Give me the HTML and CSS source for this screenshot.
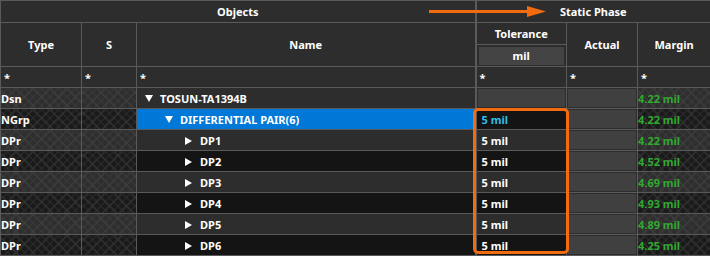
FILE: index.html
```html
<!DOCTYPE html>
<html lang="en">
<head>
    <meta charset="UTF-8">
    <meta name="viewport" content="width=device-width, initial-scale=1.0">
    <title>Static Phase</title>
    <link rel="stylesheet" href="styles.css">
</head>
<body>
    <div class="sheet">
        <table class="rules">
            <colgroup>
                <col style="width: 81px">
                <col style="width: 55px">
                <col style="width: 339px">
                <col style="width: 91px">
                <col style="width: 71px">
                <col style="width: 73px">
            </colgroup>
            <thead>
                <tr class="group">
                    <th colspan="3" class="sep">Objects</th>
                    <th colspan="3">Static Phase</th>
                </tr>
                <tr class="titles">
                    <th rowspan="2">Type</th>
                    <th rowspan="2">S</th>
                    <th rowspan="2" class="sep">Name</th>
                    <th class="tol">Tolerance</th>
                    <th rowspan="2">Actual</th>
                    <th rowspan="2">Margin</th>
                </tr>
                <tr class="units">
                    <th class="unit"><span>mil</span></th>
                </tr>
                <tr class="filters">
                    <td>*</td>
                    <td>*</td>
                    <td class="sep">*</td>
                    <td>*</td>
                    <td>*</td>
                    <td>*</td>
                </tr>
            </thead>
            <tbody>
                <tr class="light">
                    <td class="hatch">Dsn</td>
                    <td class="hatch"></td>
                    <td class="name sep"><span class="lvl0"><i class="down"></i>TOSUN-TA1394B</span></td>
                    <td class="tolv off"></td>
                    <td class="actual"></td>
                    <td class="hatch margin">4.22 mil</td>
                </tr>
                <tr class="dark">
                    <td class="hatch">NGrp</td>
                    <td class="hatch"></td>
                    <td class="name sep selected"><span class="lvl1"><i class="down"></i>DIFFERENTIAL PAIR(6)</span></td>
                    <td class="tolv picked">5 mil</td>
                    <td class="actual"></td>
                    <td class="hatch margin">4.22 mil</td>
                </tr>
                <tr class="light">
                    <td class="hatch">DPr</td>
                    <td class="hatch"></td>
                    <td class="name sep"><span class="lvl2"><i class="right"></i>DP1</span></td>
                    <td class="tolv">5 mil</td>
                    <td class="actual"></td>
                    <td class="hatch margin">4.22 mil</td>
                </tr>
                <tr class="dark">
                    <td class="hatch">DPr</td>
                    <td class="hatch"></td>
                    <td class="name sep"><span class="lvl2"><i class="right"></i>DP2</span></td>
                    <td class="tolv">5 mil</td>
                    <td class="actual"></td>
                    <td class="hatch margin">4.52 mil</td>
                </tr>
                <tr class="light">
                    <td class="hatch">DPr</td>
                    <td class="hatch"></td>
                    <td class="name sep"><span class="lvl2"><i class="right"></i>DP3</span></td>
                    <td class="tolv">5 mil</td>
                    <td class="actual"></td>
                    <td class="hatch margin">4.69 mil</td>
                </tr>
                <tr class="dark">
                    <td class="hatch">DPr</td>
                    <td class="hatch"></td>
                    <td class="name sep"><span class="lvl2"><i class="right"></i>DP4</span></td>
                    <td class="tolv">5 mil</td>
                    <td class="actual"></td>
                    <td class="hatch margin">4.93 mil</td>
                </tr>
                <tr class="light">
                    <td class="hatch">DPr</td>
                    <td class="hatch"></td>
                    <td class="name sep"><span class="lvl2"><i class="right"></i>DP5</span></td>
                    <td class="tolv">5 mil</td>
                    <td class="actual"></td>
                    <td class="hatch margin">4.89 mil</td>
                </tr>
                <tr class="dark">
                    <td class="hatch">DPr</td>
                    <td class="hatch"></td>
                    <td class="name sep"><span class="lvl2"><i class="right"></i>DP6</span></td>
                    <td class="tolv">5 mil</td>
                    <td class="actual"></td>
                    <td class="hatch margin">4.25 mil</td>
                </tr>
            </tbody>
        </table>

        <!-- annotation overlay -->
        <svg class="arrow" width="120" height="14" viewBox="0 0 120 14">
            <path d="M0 6.5 H102" stroke="#f26b0f" stroke-width="3"/>
            <path d="M98 1 L117 6.5 L98 12 Z" fill="#f26b0f"/>
        </svg>
        <div class="callout"></div>
    </div>
</body>
</html>
```

FILE: styles.css
```css
body {
    margin: 0;
    background-color: #ffffff;
    font-family: 'Noto Sans', 'Open Sans', sans-serif;
    font-size: 11px;
    font-weight: bold;
    color: #ffffff;
}

.sheet {
    position: relative;
    width: 710px;
}

.rules {
    width: 710px;
    table-layout: fixed;
    border-collapse: collapse;
    background-color: #2d2d2d;
    border: 1px solid #5a5a5a;
}

.rules th,
.rules td {
    border: 1px solid #5a5a5a;
    padding: 0;
    white-space: nowrap;
    overflow: hidden;
}

.rules th {
    font-weight: bold;
    text-align: center;
}

.rules .sep {
    border-right: 2px solid #5a5a5a;
}

.group th {
    height: 21px;
}

.titles th {
    height: 21px;
}

.units th {
    height: 21px;
}

.unit span {
    display: block;
    margin: 0 2px;
    line-height: 18px;
    background-color: #444444;
}

.filters td {
    height: 20px;
    padding-left: 3px;
}

tbody td {
    height: 20px;
    padding-left: 3px;
}

tbody .light td {
    background-color: #2d2d2d;
}

tbody .dark td {
    background-color: #141414;
}

tbody .light td.hatch {
    background-color: #2e2e2e;
    background-image:
        repeating-linear-gradient(45deg, #3e3e3e 0 1px, transparent 1px 6px),
        repeating-linear-gradient(-45deg, #3e3e3e 0 1px, transparent 1px 6px);
}

tbody .dark td.hatch {
    background-color: #1a1a1a;
    background-image:
        repeating-linear-gradient(45deg, #333333 0 1px, transparent 1px 6px),
        repeating-linear-gradient(-45deg, #333333 0 1px, transparent 1px 6px);
}

tbody td.name {
    padding-left: 0;
}

tbody .dark td.selected {
    background-color: #0078d7;
}

.lvl0 {
    padding-left: 8px;
}

.lvl1 {
    padding-left: 28px;
}

.lvl2 {
    padding-left: 48px;
}

.down,
.right {
    display: inline-block;
    width: 0;
    height: 0;
    vertical-align: 1px;
}

.down {
    border-left: 4px solid transparent;
    border-right: 4px solid transparent;
    border-top: 7px solid #ffffff;
    margin-right: 7px;
}

.right {
    border-top: 4px solid transparent;
    border-bottom: 4px solid transparent;
    border-left: 7px solid #ffffff;
    margin-right: 8px;
    vertical-align: 0;
}

tbody td.tolv {
    padding-left: 5px;
}

tbody td.tolv.off,
tbody td.actual {
    background-color: #404040;
    box-shadow: inset 0 0 0 1px #2d2d2d;
}

tbody .dark td.tolv.picked {
    color: #2fbde8;
}

tbody td.margin {
    color: #32a832;
}

.arrow {
    position: absolute;
    left: 429px;
    top: 5px;
}

.callout {
    position: absolute;
    left: 473px;
    top: 108px;
    width: 90px;
    height: 140px;
    border: 3px solid #f26b0f;
    border-radius: 5px;
}
```
